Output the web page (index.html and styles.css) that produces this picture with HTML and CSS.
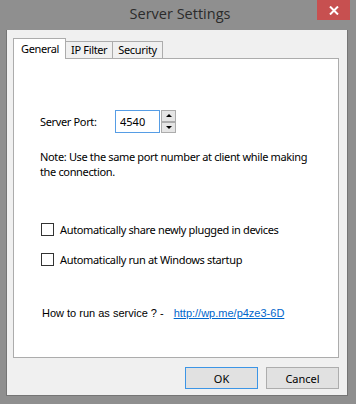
FILE: index.html
```html
<!DOCTYPE html>
<html lang="en">
<head>
  <meta charset="UTF-8">
  <title>Server Settings</title>
  <link rel="stylesheet" href="styles.css">
</head>
<body>

  <div class="window">
    <!-- Title bar -->
    <div class="titlebar">
      <span></span>
      <div class="title">Server Settings</div>
      <button class="close-btn">
        <svg width="10" height="9" viewBox="0 0 10 9"><path d="M1 0.5 L9 8.5 M9 0.5 L1 8.5" stroke="#fff" stroke-width="2"/></svg>
      </button>
    </div>

    <div class="client">
      <div class="tabs">
        <div class="tab active">General</div>
        <div class="tab">IP Filter</div>
        <div class="tab">Security</div>
      </div>

      <div class="panel">
        <div class="port-row">
          <label class="port-label">Server Port:</label>
          <input class="port-input" type="text" value="4540">
          <div class="spinner">
            <div class="spin-btn"><span class="arrow-up"></span></div>
            <div class="spin-btn"><span class="arrow-down"></span></div>
          </div>
        </div>

        <p class="note">Note: Use the same port number at client while making the connection.</p>

        <div class="check-row">
          <span class="checkbox"></span>
          <span>Automatically share newly plugged in devices</span>
        </div>
        <div class="check-row">
          <span class="checkbox"></span>
          <span>Automatically run at Windows startup</span>
        </div>

        <div class="service-row">
          <span>How to run as service ? -</span>
          <a href="#" class="service-link">http://wp.me/p4ze3-6D</a>
        </div>
      </div>

      <div class="buttons">
        <button class="btn btn-default">OK</button>
        <button class="btn">Cancel</button>
      </div>
    </div>
  </div>

</body>
</html>
```

FILE: styles.css
```css
* {
  box-sizing: border-box;
}
body {
  margin: 0;
  background-color: #8f8f8f;
  font-family: 'Noto Sans', sans-serif;
  font-size: 11px;
  letter-spacing: -0.35px;
  color: #000;
}
.window {
  width: 356px;
  height: 404px;
  padding: 0 8px 8px 6px;
  display: flex;
  flex-direction: column;
}
.titlebar {
  height: 30px;
  display: grid;
  grid-template-columns: 1fr auto 1fr;
  align-items: start;
}
.title {
  font-family: 'Open Sans', sans-serif;
  font-size: 14.5px;
  letter-spacing: 0;
  color: #2b2b2b;
  margin-top: 4px;
  margin-left: 6px;
}
.close-btn {
  justify-self: end;
  width: 33px;
  height: 20px;
  margin-right: -2px;
  border: none;
  padding: 0;
  background-color: #c75050;
  display: flex;
  justify-content: center;
  align-items: center;
}
.client {
  flex: 1;
  background-color: #f0f0f0;
  border: 1px solid #757575;
  border-top: none;
  padding: 8px 8px 0 6px;
  display: flex;
  flex-direction: column;
}
.tabs {
  display: flex;
  align-items: flex-end;
  height: 20px;
  padding-left: 1px;
  position: relative;
  z-index: 1;
}
.tab {
  height: 17px;
  padding: 0 5px;
  border: 1px solid #acacac;
  border-bottom: none;
  background-color: #f0f0f0;
  line-height: 15px;
  margin-left: -1px;
}
.tab.active {
  height: 21px;
  margin-bottom: -1px;
  background-color: #fff;
  padding: 0 6px 0 7px;
  line-height: 20px;
  margin-left: -1px;
}
.panel {
  width: 326px;
  height: 300px;
  background-color: #fff;
  border: 1px solid #acacac;
  padding: 51px 0 0 26px;
}
.port-row {
  display: flex;
  align-items: center;
  height: 23px;
}
.port-label {
  width: 75px;
}
.port-input {
  width: 45px;
  height: 23px;
  border: 1px solid #569de5;
  font-family: 'Noto Sans', sans-serif;
  font-size: 11px;
  padding: 0 4px;
  outline: none;
}
.spinner {
  margin-left: 1px;
  display: flex;
  flex-direction: column;
  height: 23px;
}
.spin-btn {
  width: 15px;
  height: 11.5px;
  background-color: #e5e5e5;
  border: 1px solid #acacac;
  display: flex;
  justify-content: center;
  align-items: center;
}
.arrow-up {
  border-left: 3px solid transparent;
  border-right: 3px solid transparent;
  border-bottom: 3px solid #000;
}
.arrow-down {
  border-left: 3px solid transparent;
  border-right: 3px solid transparent;
  border-top: 3px solid #000;
}
.note {
  margin: 16px 0 0 0;
  width: 280px;
  line-height: 15px;
}
.check-row {
  display: flex;
  align-items: center;
  gap: 6px;
  margin-top: 43px;
  padding-left: 1px;
}
.check-row + .check-row {
  margin-top: 15px;
}
.checkbox {
  width: 13px;
  height: 13px;
  border: 1px solid #333;
  background-color: #fff;
}
.service-row {
  margin-top: 40px;
  padding-left: 2px;
  font-family: 'Liberation Sans', Arial, sans-serif;
  font-size: 11px;
  letter-spacing: 0;
  display: flex;
  gap: 10px;
}
.service-link {
  color: #0066cc;
}
.buttons {
  display: flex;
  justify-content: flex-end;
  gap: 8px;
  margin-top: 9px;
  padding-right: 0;
}
.btn {
  width: 73px;
  height: 22px;
  background-color: #e1e1e1;
  border: 1px solid #adadad;
  font-family: 'Noto Sans', sans-serif;
  font-size: 11px;
  padding: 0;
}
.btn-default {
  border-color: #3c95e6;
}
```
